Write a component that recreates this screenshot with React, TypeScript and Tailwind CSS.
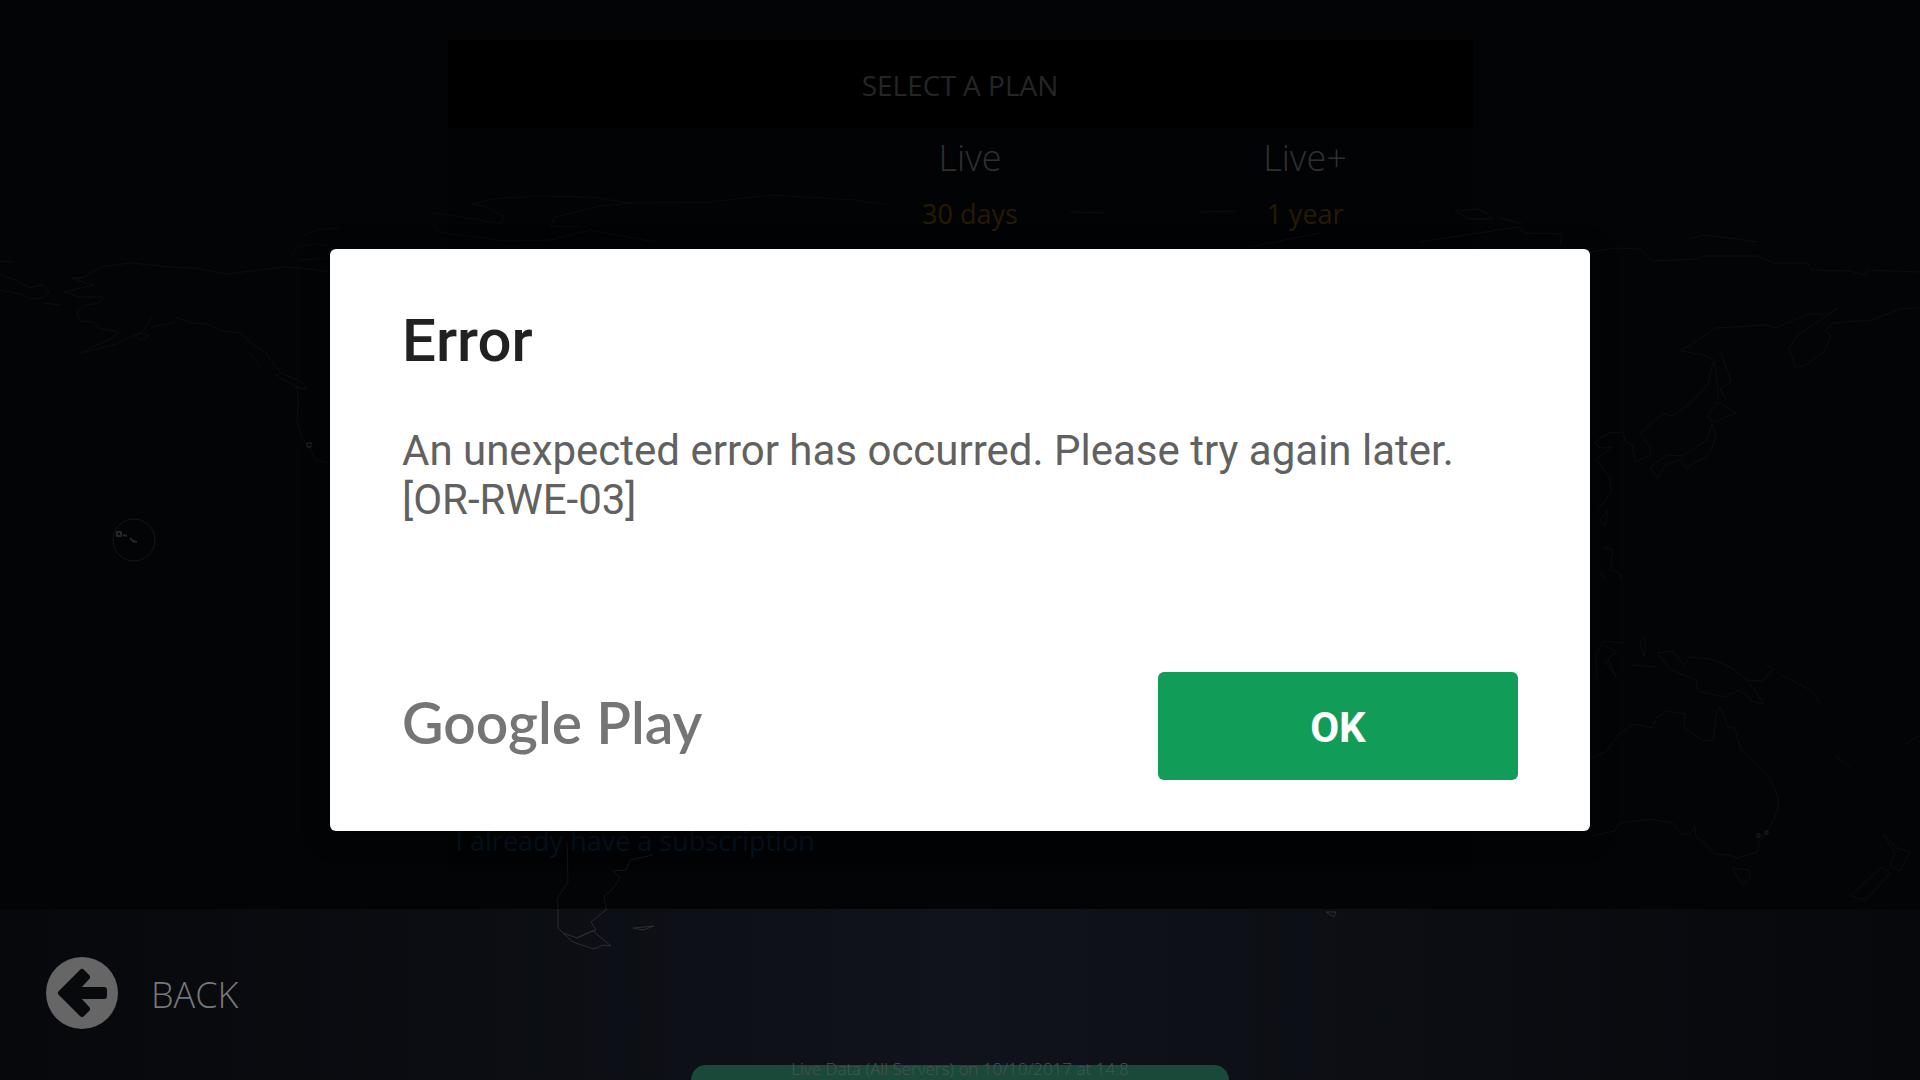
const plans = [
  { name: 'Live', term: '30 days' },
  { name: 'Live+', term: '1 year' },
];

function WorldMap() {
  return (
    <svg
      className="absolute inset-0 h-full w-full"
      viewBox="0 0 1920 1080"
      preserveAspectRatio="xMidYMid slice"
      fill="none"
      stroke="#0c0e0f"
      strokeWidth="1"
      aria-hidden="true"
    >
      {/* Alaska and the Pacific coast */}
      <path d="M0 275 L15 280 27 287 32 287 43 285 49 292 42 298 32 299 20 294 0 290 M0 261 L13 262 M44 303 L60 305 M328 272 L310 269 285 267 258 270 228 274 194 268 170 267 131 263 105 266 90 273 83 278 71 278 94 285 64 292 80 297 103 297 99 303 83 306 77 313 80 321 93 322 98 328 119 332 110 339 81 353 117 344 143 331 152 317 M152 327 L172 323 177 318 192 323 208 324 222 331 240 333 254 345 265 352 280 372 303 383 307 389 296 387 275 374 M297 385 L298 402 297 420 302 438 309 447 316 460 328 463 M135 336 L143 333 149 336 141 340 Z M250 354 L261 367" />
      <path d="M304 235 L320 229 340 228 M292 256 C295 244 310 242 330 246 M300 260 L325 258 M434 213 L450 215 474 219 500 224 504 217 486 206 472 204 492 199 535 196 590 197 632 203 600 206 555 217 550 226 585 227 M632 203 L710 202 770 195 855 200 890 205 M434 222 L438 232 505 241 550 240 590 230 655 242" stroke="#090b0c" />
      {/* Hawaii range ring */}
      <circle cx="134" cy="540" r="21" stroke="#141719" />
      <path d="M117 532h4v4h-4z M123 535l4 1 M130 538l3 3 4 1" stroke="#25292b" strokeWidth="2" />
      <path d="M307 443h4v4h-4z" stroke="#25292b" />
      {/* Siberia, Kamchatka and Japan */}
      <path d="M1070 212 L1105 213 M1200 212 L1235 211 M1250 247 L1320 233 M1455 211 L1480 209 1493 219 1470 219 Z M1420 242 L1518 227 1525 233 1562 234 1560 245 M1500 218 L1522 224 M1590 252 L1615 248 1640 249 1652 261 1698 259 1702 256 1758 256 1774 263 1808 263 1812 270 1850 271 1865 275 1868 270 1920 272 M1690 239 L1705 235 1737 239 1757 242 M1920 308 L1900 309 1872 320 1833 323 1825 331 1831 336 1824 352 1804 366 1795 367 1789 348 1797 336 1838 308 1828 314 1808 314 1775 328 1767 325 1716 328 1681 351 1704 355 1714 360 1717 381 1718 399 M1721 353 L1731 382 1720 389 1725 398 M1713 362 L1708 384 1692 402 1672 416 1664 414 1653 421 1640 434 1650 447 1651 455 1635 462 1632 445 1625 441 1623 432 1608 433 1594 443 1600 448 1613 447 1596 459 1610 478 1611 493 1593 516 M1718 402 L1736 413 1714 422 1707 416 Z M1712 424 L1707 440 1683 456 1667 455 1650 468 1658 478 1665 465 1680 460 1686 468 1710 454 1716 435 Z M1600 520 L1608 510 1605 527 Z M1604 547 L1613 550 1610 570 1618 572 1622 580 M1600 572 L1606 580" />
      {/* Indonesia, Australia and New Zealand */}
      <path d="M1597 678 L1596 655 1603 641 1624 643 M1603 645 L1617 652 1608 658 1616 677 1604 660 M1643 637 L1646 642 1644 656 1640 645 Z M1631 665 L1658 667 M1657 653 L1673 651 1684 665 1690 657 1710 659 1730 667 1748 681 1764 704 1754 702 1740 690 1724 697 1697 691 1697 681 1670 669 Z M1746 680 L1762 681 1773 669 1765 663 M1782 675 L1810 690 1823 706 M1590 758 L1606 752 1618 735 1634 724 1652 728 1657 717 1667 711 1685 714 1684 727 1703 741 1713 740 1716 715 1720 706 1728 727 1734 727 1741 750 1754 761 1770 779 1778 797 1778 809 1770 826 1760 841 1757 852 1741 857 1737 858 1728 855 1715 854 1705 843 1696 837 1695 826 1690 834 1681 834 1673 823 1650 819 1619 823 1615 831 1590 836 M1732 868 L1749 870 1750 879 1742 884 Z M1883 834 L1891 842 1897 848 1910 852 1904 863 1900 871 1890 866 1895 853 Z M1882 867 L1890 873 1873 892 1866 900 1850 896 Z M1835 756 L1851 767 M1906 744 L1920 735" />
      <path d="M1757 834h3v3h-3z M1765 831h3v3h-3z" stroke="#1b1f21" />
      {/* Southern tip of South America */}
      <path d="M567 842 L568 882 557 899 558 908 M653 855 L630 860 626 870 613 871 620 878 612 890 604 896 606 909" stroke="#121416" />
      <path d="M558 909 L558 928 563 933 577 938 587 933 596 930 591 922 607 909 M563 933 L573 942 594 949 603 945 611 946 593 931 577 938 M633 928 L654 926 643 930 Z M1326 912 L1336 912 1334 917 Z" stroke="#2b2e33" />
    </svg>
  );
}

function BackIcon() {
  return (
    <svg className="size-18" viewBox="0 0 72 72" aria-hidden="true">
      <circle cx="36" cy="36" r="36" fill="#666666" />
      <path
        d="M15 36 36 15 41 20 29 33H58V39H29L41 52 36 57Z"
        fill="#08090c"
        stroke="#08090c"
        strokeWidth="6"
        strokeLinejoin="round"
      />
    </svg>
  );
}

export default function App() {
  return (
    <div className="relative flex min-h-screen flex-col overflow-hidden bg-[#030406] font-['Open_Sans','Noto_Sans',sans-serif]">
      <div className="flex flex-1 flex-col items-center px-6 pt-10 pb-9">
        <section className="flex w-full max-w-[1025px] flex-1 flex-col bg-[#020304]">
          <h1 className="bg-black pt-[25px] pb-[23px] text-center text-[28px] leading-10 text-[#252525]">
            SELECT A PLAN
          </h1>
          <div className="grid grid-cols-[355fr_335fr_335fr] pt-1.5 text-center">
            {plans.map((plan) => (
              <div key={plan.name} className="first:col-start-2">
                <h2 className="text-[36px] leading-12 font-light text-[#303030]">{plan.name}</h2>
                <p className="pt-3 text-[27px] leading-10 text-[#281a02]">{plan.term}</p>
              </div>
            ))}
          </div>
          <a href="#subscription" className="mt-auto mb-2 pl-2 text-[27px] leading-12 text-[#04131e]">
            I already have a subscription
          </a>
        </section>
      </div>

      <footer className="flex flex-col bg-linear-to-r from-[#07080b] via-[#10131b] to-[#07080b]">
        <div className="px-[46px] pt-[46px]">
          <button type="button" className="relative z-10 flex items-center gap-[33px] text-[36px] leading-18 font-light text-[#787878]">
            <BackIcon />
            <span className="pt-1">BACK</span>
          </button>
        </div>
        <div className="mx-auto mt-[34px] h-[15px] w-[538px] max-w-full rounded-t-2xl bg-[#1a4939] text-center">
          <p className="relative z-10 -mt-2 text-[17px] leading-6 font-light text-[#46564f]">
            Live Data (All Servers) on 10/10/2017 at 14:8
          </p>
        </div>
      </footer>

      <WorldMap />

      <div className="absolute inset-0 z-20 flex items-center justify-center p-6">
        <div
          role="alertdialog"
          aria-labelledby="error-title"
          aria-describedby="error-text"
          className="w-full max-w-[1260px] rounded-md bg-white px-[72px] pt-[57px] pb-[51px] font-[Roboto,sans-serif] shadow-[0_4px_24px_#00000080]"
        >
          <h2 id="error-title" className="text-[60px] leading-[70px] font-medium text-[#212121]">
            Error
          </h2>
          <p id="error-text" className="pt-[50px] text-[42px] leading-[49px] text-[#616161]">
            An unexpected error has occurred. Please try again later. [OR-RWE-03]
          </p>
          <div className="flex items-center justify-between pt-[148px]">
            <span className="pb-2 font-[Lato,sans-serif] text-[57px] leading-[72px] font-semibold text-[#757575]">
              Google Play
            </span>
            <button
              type="button"
              className="h-27 w-[360px] rounded-md bg-[#119d58] pt-0.5 text-[42px] leading-[49px] font-bold text-white"
            >
              OK
            </button>
          </div>
        </div>
      </div>
    </div>
  );
}
